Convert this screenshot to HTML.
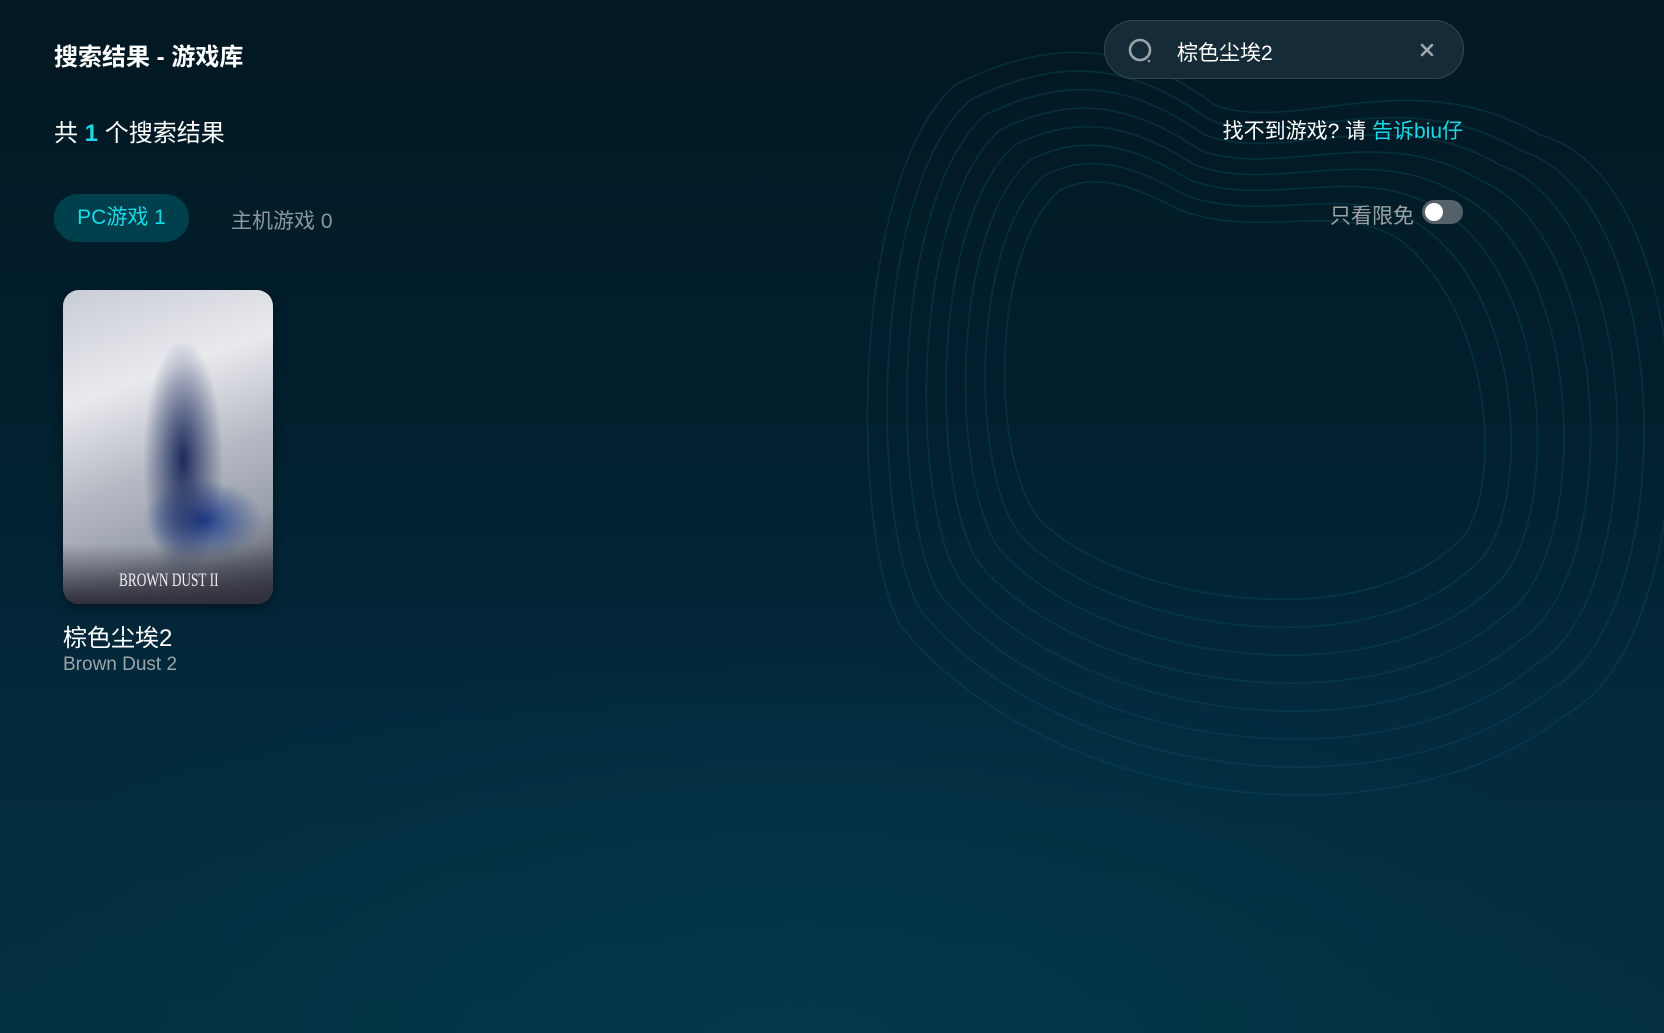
<!DOCTYPE html>
<html><head><meta charset="utf-8"><style>
*{margin:0;padding:0;box-sizing:border-box}
body{width:1664px;height:1033px;overflow:hidden;font-family:"Liberation Sans","Noto Sans CJK SC",sans-serif;color:#fff;
background:radial-gradient(ellipse 900px 400px at 800px 1050px,#03384a 0%,rgba(3,56,74,0) 100%),linear-gradient(180deg,#021822 0%,#021f2e 40%,#032a3d 70%,#032f3e 100%);position:relative}
.abs{position:absolute;white-space:nowrap}
</style></head><body>
<svg class="abs" style="left:0;top:0" width="1664" height="1033" viewBox="0 0 1664 1033">
<g fill="none" stroke="#0a4a58" stroke-width="1.6" opacity="0.45">
<path d="M1060 190 C1100 170,1140 190,1180 210 C1260 240,1340 200,1400 240 C1500 320,1500 500,1460 540 C1360 640,1120 600,1040 520 C990 460,990 250,1060 190"/>
<path d="M1045 175 C1095 150,1140 170,1185 195 C1265 225,1350 180,1420 225 C1530 300,1530 520,1475 565 C1365 670,1110 630,1020 535 C970 470,970 240,1045 175"/>
<path d="M1030 160 C1090 130,1140 150,1190 180 C1270 210,1360 160,1440 210 C1560 280,1560 540,1490 590 C1370 700,1100 660,1000 550 C950 480,950 230,1030 160"/>
<path d="M1015 145 C1085 110,1140 130,1195 165 C1275 195,1370 140,1460 195 C1590 260,1590 560,1505 615 C1375 730,1090 690,980 565 C930 490,930 220,1015 145"/>
<path d="M1000 130 C1080 90,1140 110,1200 150 C1280 180,1380 120,1480 180 C1620 240,1620 580,1520 640 C1380 760,1080 720,960 580 C910 500,910 210,1000 130"/>
<path d="M985 115 C1075 70,1140 90,1205 135 C1285 165,1390 100,1500 165 C1650 220,1650 600,1535 665 C1385 790,1070 750,940 595 C890 510,890 200,985 115"/>
<path d="M970 100 C1070 50,1140 70,1210 120 C1290 150,1400 80,1520 150 C1680 200,1680 620,1550 690 C1390 820,1060 780,920 610 C870 520,870 190,970 100"/>
<path d="M955 85 C1065 30,1140 50,1215 105 C1295 135,1410 60,1540 135 C1710 180,1710 640,1565 715 C1395 850,1050 810,900 625 C850 530,850 180,955 85"/>
</g></svg>
<div class="abs" style="left:54px;top:37px;font-size:24px;font-weight:bold">搜索结果 - 游戏库</div>
<div class="abs" style="left:1104px;top:20px;width:360px;height:59px;border-radius:30px;background:#152c38;border:1px solid #34474f"></div>
<svg class="abs" style="left:1127px;top:37px" width="28" height="28" viewBox="0 0 28 28"><circle cx="13" cy="13" r="10" fill="none" stroke="#9aa3a8" stroke-width="2.6"/><circle cx="22" cy="24" r="1.3" fill="#9aa3a8"/></svg>
<div class="abs" style="left:1177px;top:37px;font-size:21px">棕色尘埃2</div>
<svg class="abs" style="left:1419px;top:42px" width="16" height="16" viewBox="0 0 16 16"><path d="M3 3 L13 13 M13 3 L3 13" stroke="#a0a8ac" stroke-width="2.6" stroke-linecap="round"/></svg>
<div class="abs" style="left:54px;top:113px;font-size:24px">共 <b style="color:#1ad8e8">1</b> 个搜索结果</div>
<div class="abs" style="right:201px;top:115px;font-size:21px">找不到游戏? 请 <span style="color:#1ad8e8">告诉biu仔</span></div>
<div class="abs" style="left:54px;top:194px;width:135px;height:48px;border-radius:24px;background:#00404c;color:#1ad8e8;font-size:21px;line-height:48px;text-align:center">PC游戏 1</div>
<div class="abs" style="left:231px;top:205px;font-size:21px;color:#8b979e">主机游戏 0</div>
<div class="abs" style="left:1330px;top:200px;font-size:21px;color:#9aa2a6">只看限免</div>
<div class="abs" style="left:1422px;top:200px;width:41px;height:24px;border-radius:12px;background:#55616a"></div>
<div class="abs" style="left:1425px;top:203px;width:18px;height:18px;border-radius:50%;background:#fff"></div>
<div class="abs" style="left:63px;top:290px;width:210px;height:314px;border-radius:16px;overflow:hidden;box-shadow:0 4px 10px rgba(0,0,0,.4);
background:radial-gradient(ellipse 40px 120px at 120px 170px,#1c2a5c 0%,rgba(28,42,92,0) 100%),radial-gradient(ellipse 60px 40px at 140px 230px,#1d3d8c 0%,rgba(29,61,140,0) 100%),linear-gradient(160deg,#c8ccd4 0%,#e8eaee 30%,#b6bac4 55%,#9aa0ac 75%,#3b3e4a 100%)">
<div class="abs" style="left:0;right:0;bottom:0;height:60px;background:linear-gradient(180deg,rgba(40,40,50,0),#2e2f3a)"></div>
<div class="abs" style="left:56px;top:280px;font-family:'Liberation Serif',serif;font-size:19px;color:#eee;transform:scaleX(.7);transform-origin:left">BROWN DUST II</div>
</div>
<div class="abs" style="left:63px;top:618px;font-size:24px">棕色尘埃2</div>
<div class="abs" style="left:63px;top:654px;font-size:19px;color:#9aa5aa">Brown Dust 2</div>
</body></html>
